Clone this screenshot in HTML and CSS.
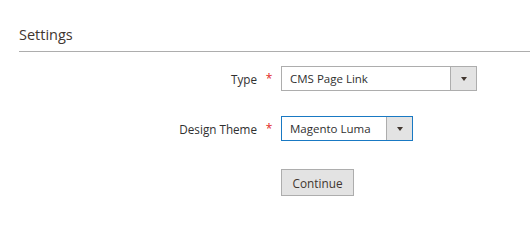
FILE: index.html
```html
<!DOCTYPE html>
<html>
<head>
<meta charset="utf-8">
<link rel="stylesheet" href="styles.css">
</head>
<body>
<div class="page">
  <div class="section-title">Settings</div>
  <div class="form">
    <div class="field">
      <label class="label">Type</label>
      <span class="req">*</span>
      <div class="select select-type">
        <span class="select-value">CMS Page Link</span>
        <span class="select-arrow"><span class="tri"></span></span>
      </div>
    </div>
    <div class="field">
      <label class="label">Design Theme</label>
      <span class="req">*</span>
      <div class="select select-theme focused">
        <span class="select-value">Magento Luma</span>
        <span class="select-arrow"><span class="tri"></span></span>
      </div>
    </div>
    <div class="actions">
      <button class="btn">Continue</button>
    </div>
  </div>
</div>
</body>
</html>
```
FILE: styles.css
```css
html, body {
  margin: 0;
  padding: 0;
  background: #ffffff;
}
body {
  font-family: "Open Sans", "Liberation Sans", sans-serif;
  color: #303030;
}
.page {
  padding: 25px 0 0 19px;
}
.section-title {
  font-size: 14.5px;
  line-height: 20px;
  color: #41362f;
  padding-bottom: 6px;
  border-bottom: 1px solid #adadad;
}
.form {
  display: flex;
  flex-direction: column;
  padding-top: 14px;
}
.field {
  display: flex;
  align-items: center;
  margin-bottom: 25px;
}
.label {
  width: 238px;
  text-align: right;
  font-size: 11.7px;
  font-weight: 400;
  color: #303030;
}
.req {
  width: 24px;
  text-align: center;
  color: #e22626;
  font-size: 12px;
}
.select {
  display: flex;
  height: 25px;
  box-sizing: border-box;
  border: 1px solid #adadad;
  background: #fff;
}
.select-type { width: 196px; }
.select-theme { width: 132px; }
.select.focused { border-color: #1979c3; }
.select-value {
  flex: 1;
  padding-left: 8px;
  font-size: 11.5px;
  line-height: 23px;
  color: #303030;
}
.select-arrow {
  width: 25px;
  background: #e3e3e3;
  border-left: 1px solid #adadad;
  display: flex;
  align-items: center;
  justify-content: center;
}
.tri {
  width: 0;
  height: 0;
  border-left: 3px solid transparent;
  border-right: 3px solid transparent;
  border-top: 4px solid #41362f;
}
.actions {
  padding-left: 262px;
  margin-top: 3px;
}
.btn {
  font-family: "Open Sans", "Liberation Sans", sans-serif;
  font-size: 11.8px;
  color: #41362f;
  background: #e3e3e3;
  border: 1px solid #adadad;
  height: 27px;
  width: 73px;
  padding: 0;
  border-radius: 0;
}
```
